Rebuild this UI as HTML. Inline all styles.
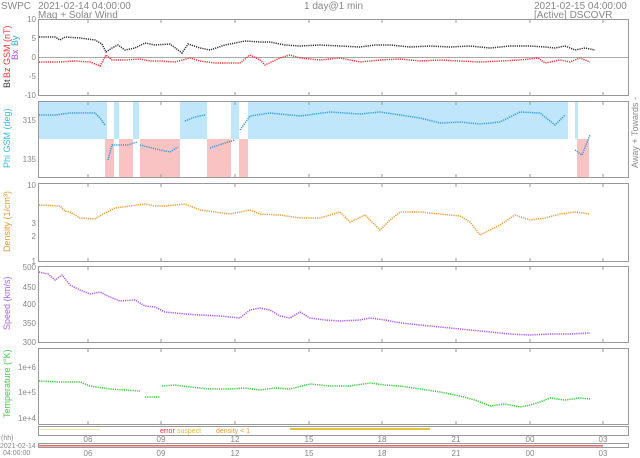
<!DOCTYPE html>
<html><head><meta charset="utf-8"><style>
html,body{margin:0;padding:0;background:#fff;width:640px;height:458px;overflow:hidden}
svg{display:block;font-family:"Liberation Sans",sans-serif}
</style></head><body>
<svg width="640" height="458" viewBox="0 0 640 458">
<g fill="#888" font-size="10">
<text x="1" y="9">SWPC</text>
<text x="38" y="9">2021-02-14 04:00:00</text>
<text x="38" y="18">Mag + Solar Wind</text>
<text x="304" y="9">1 day@1 min</text>
<text x="534" y="9">2021-02-15 04:00:00</text>
<text x="534" y="18">[Active] DSCOVR</text>
</g>
<g fill="none" stroke="#999" stroke-width="1">
<rect x="38.5" y="19.5" width="590" height="76"/>
<rect x="38.5" y="101.5" width="590" height="76"/>
<rect x="38.5" y="183.5" width="590" height="78"/>
<rect x="38.5" y="266.5" width="590" height="76"/>
<rect x="38.5" y="348.5" width="590" height="76"/>
<rect x="38.5" y="426.5" width="590" height="9"/>
<rect x="38.5" y="443.5" width="590" height="4"/>
</g>
<g>
<rect x="39" y="102" width="68" height="37" fill="#bfe6fb"/>
<rect x="114" y="102" width="5" height="37" fill="#bfe6fb"/>
<rect x="133" y="102" width="6" height="37" fill="#bfe6fb"/>
<rect x="180" y="102" width="27" height="37" fill="#bfe6fb"/>
<rect x="231" y="102" width="8" height="37" fill="#bfe6fb"/>
<rect x="248" y="102" width="320" height="37" fill="#bfe6fb"/>
<rect x="575" y="102" width="3" height="37" fill="#bfe6fb"/>
<rect x="105" y="139" width="9" height="38" fill="#fac3c3"/>
<rect x="119" y="139" width="14" height="38" fill="#fac3c3"/>
<rect x="140" y="139" width="40" height="38" fill="#fac3c3"/>
<rect x="207" y="139" width="24" height="38" fill="#fac3c3"/>
<rect x="239" y="139" width="9" height="38" fill="#fac3c3"/>
<rect x="577" y="139" width="12" height="38" fill="#fac3c3"/>
</g>
<line x1="39" y1="57.5" x2="628" y2="57.5" stroke="#aaa"/>
<g stroke="#999">
<path d="M88 19v4M161 19v4M235 19v4M309 19v4M382 19v4M456 19v4M530 19v4M603 19v4M88 96v-4M161 96v-4M235 96v-4M309 96v-4M382 96v-4M456 96v-4M530 96v-4M603 96v-4"/>
<path d="M88 101v4M161 101v4M235 101v4M309 101v4M382 101v4M456 101v4M530 101v4M603 101v4M88 178v-4M161 178v-4M235 178v-4M309 178v-4M382 178v-4M456 178v-4M530 178v-4M603 178v-4"/>
<path d="M88 183v4M161 183v4M235 183v4M309 183v4M382 183v4M456 183v4M530 183v4M603 183v4M88 262v-4M161 262v-4M235 262v-4M309 262v-4M382 262v-4M456 262v-4M530 262v-4M603 262v-4"/>
<path d="M88 266v4M161 266v4M235 266v4M309 266v4M382 266v4M456 266v4M530 266v4M603 266v4M88 343v-4M161 343v-4M235 343v-4M309 343v-4M382 343v-4M456 343v-4M530 343v-4M603 343v-4"/>
<path d="M88 348v4M161 348v4M235 348v4M309 348v4M382 348v4M456 348v4M530 348v4M603 348v4M88 425v-4M161 425v-4M235 425v-4M309 425v-4M382 425v-4M456 425v-4M530 425v-4M603 425v-4"/>
</g>
<g fill="#888" font-size="8" text-anchor="end">
<text x="36" y="22">10</text><text x="36" y="41">5</text><text x="36" y="60">0</text><text x="36" y="79">-5</text><text x="36" y="98">-10</text>
<text x="36" y="123">315</text><text x="36" y="162">135</text>
<text x="36" y="188">10</text><text x="36" y="226">3</text><text x="36" y="239">2</text><text x="36" y="264">1</text>
<text x="36" y="270">500</text><text x="36" y="290">450</text><text x="36" y="307">400</text><text x="36" y="326">350</text><text x="36" y="345">300</text>
<text x="36" y="370">1e+6</text><text x="36" y="395">1e+5</text><text x="36" y="421">1e+4</text>
</g>
<g font-size="9">
<text transform="translate(10,88) rotate(-90)" fill="#333">Bt</text>
<text transform="translate(10,78) rotate(-90)" fill="#e33">Bz GSM (nT)</text>
<text transform="translate(18,60) rotate(-90)" fill="#a4f">Bx</text>
<text transform="translate(18,46) rotate(-90)" fill="#2ad">By</text>
<text transform="translate(10,168) rotate(-90)" fill="#3bd">Phi GSM (deg)</text>
<text transform="translate(10,252) rotate(-90)" fill="#e93">Density (1/cm³)</text>
<text transform="translate(10,330) rotate(-90)" fill="#a6e">Speed (km/s)</text>
<text transform="translate(10,418) rotate(-90)" fill="#4c4">Temperature (°K)</text>
<text transform="translate(638,168) rotate(-90)" fill="#888">Away +   Towards -</text>
</g>
<g fill="none" stroke-width="1.5" stroke-dasharray="1.2 1">
<path stroke="#333" d="M39 37 L55 37 L60 40 L65 37 L80 38 L95 40 L102 44 L106 52 L112 48 L118 45 L125 50 L135 48 L145 43 L155 45 L170 44 L182 53 L188 44 L200 48 L210 50 L225 45 L245 41 L260 42 L270 42 L285 45 L300 46 L320 45 L340 46 L360 47 L375 45 L390 45 L410 47 L430 46 L450 47 L470 46 L490 48 L510 46 L530 46 L545 47 L555 48 L565 46 L575 50 L585 48 L595 50"/>
<path stroke="#e33" d="M39 62 L60 62 L75 61 L90 62 L100 66 L106 55 L112 60 L125 60 L140 59 L150 61 L160 61 L175 62 L190 58 L200 61 L215 63 L240 63 L250 55 L260 60 L265 65 L280 58 L290 55 L300 58 L320 60 L340 58 L360 62 L380 60 L400 59 L420 61 L440 60 L460 61 L480 62 L500 61 L520 60 L538 58 L545 63 L560 60 L570 62 L580 58 L590 62"/>
<path stroke="#39d" d="M39 115 L55 115 L70 113 L85 113 L95 113 L100 118 L105 125 M108 160 L112 145 L118 145 L128 145 L137 142 M140 145 L160 150 L170 152 L178 147 M185 121 L195 117 L205 115 M210 148 L225 143 L235 140 M240 130 L250 116 L270 113 L300 116 L330 112 L360 114 L380 112 L400 115 L420 118 L440 123 L460 122 L480 124 L500 122 L520 112 L540 113 L555 125 L565 115 M575 150 L582 155 L590 135"/>
<path stroke="#e93" d="M39 205 L60 206 L65 211 L70 212 L80 218 L95 219 L105 213 L115 208 L130 206 L145 204 L155 206 L165 206 L185 204 L200 210 L215 212 L230 214 L240 212 L250 210 L260 214 L280 215 L300 218 L320 218 L340 212 L350 222 L365 215 L380 230 L390 220 L400 212 L420 212 L440 214 L460 216 L470 222 L480 235 L490 230 L500 225 L515 215 L530 220 L545 218 L560 214 L575 212 L590 214"/>
<path stroke="#a5e" d="M39 272 L48 274 L55 280 L62 275 L70 285 L80 290 L90 294 L100 292 L110 297 L120 301 L135 300 L145 306 L155 307 L165 312 L185 314 L200 315 L220 316 L240 318 L250 310 L260 308 L270 310 L280 316 L290 318 L300 312 L310 318 L325 320 L340 321 L360 320 L370 318 L385 320 L395 322 L410 324 L430 326 L450 328 L470 330 L490 332 L510 334 L530 335 L550 334 L570 334 L590 333"/>
<path stroke="#3c3" d="M39 381 L60 382 L80 382 L90 386 L110 389 L125 390 L140 391 M145 397 L160 397 M162 386 L175 385 L190 387 L210 389 L230 389 L245 388 L260 390 L275 388 L290 389 L310 384 L330 386 L350 386 L370 383 L385 385 L400 386 L420 389 L440 392 L460 396 L475 400 L490 406 L505 404 L520 407 L530 405 L540 402 L550 398 L565 400 L580 398 L590 399"/>
</g>
<g fill="#e3c23a">
<rect x="40" y="429" width="60" height="1" opacity=".4"/>
<rect x="290" y="428" width="140" height="2"/>
</g>
<g font-size="7">
<text x="160" y="433" fill="#e33">error</text><text x="177" y="433" fill="#db3">suspect</text><text x="216" y="433" fill="#e93">density &lt; 1</text>
</g>
<rect x="39" y="445" width="564" height="1.5" fill="#e66"/>
<g fill="#888" font-size="8" text-anchor="middle">
<text x="88" y="442">06</text><text x="161" y="442">09</text><text x="235" y="442">12</text><text x="309" y="442">15</text><text x="382" y="442">18</text><text x="456" y="442">21</text><text x="530" y="442">00</text><text x="603" y="442">03</text>
<text x="88" y="456">06</text><text x="161" y="456">09</text><text x="235" y="456">12</text><text x="309" y="456">15</text><text x="382" y="456">18</text><text x="456" y="456">21</text><text x="530" y="456">00</text><text x="603" y="456">03</text>
</g>
<g fill="#888" font-size="7">
<text x="1" y="440">(hh)</text><text x="0" y="448">2021-02-14</text><text x="3" y="455">04:00:00</text>
</g>
</svg>
</body></html>
